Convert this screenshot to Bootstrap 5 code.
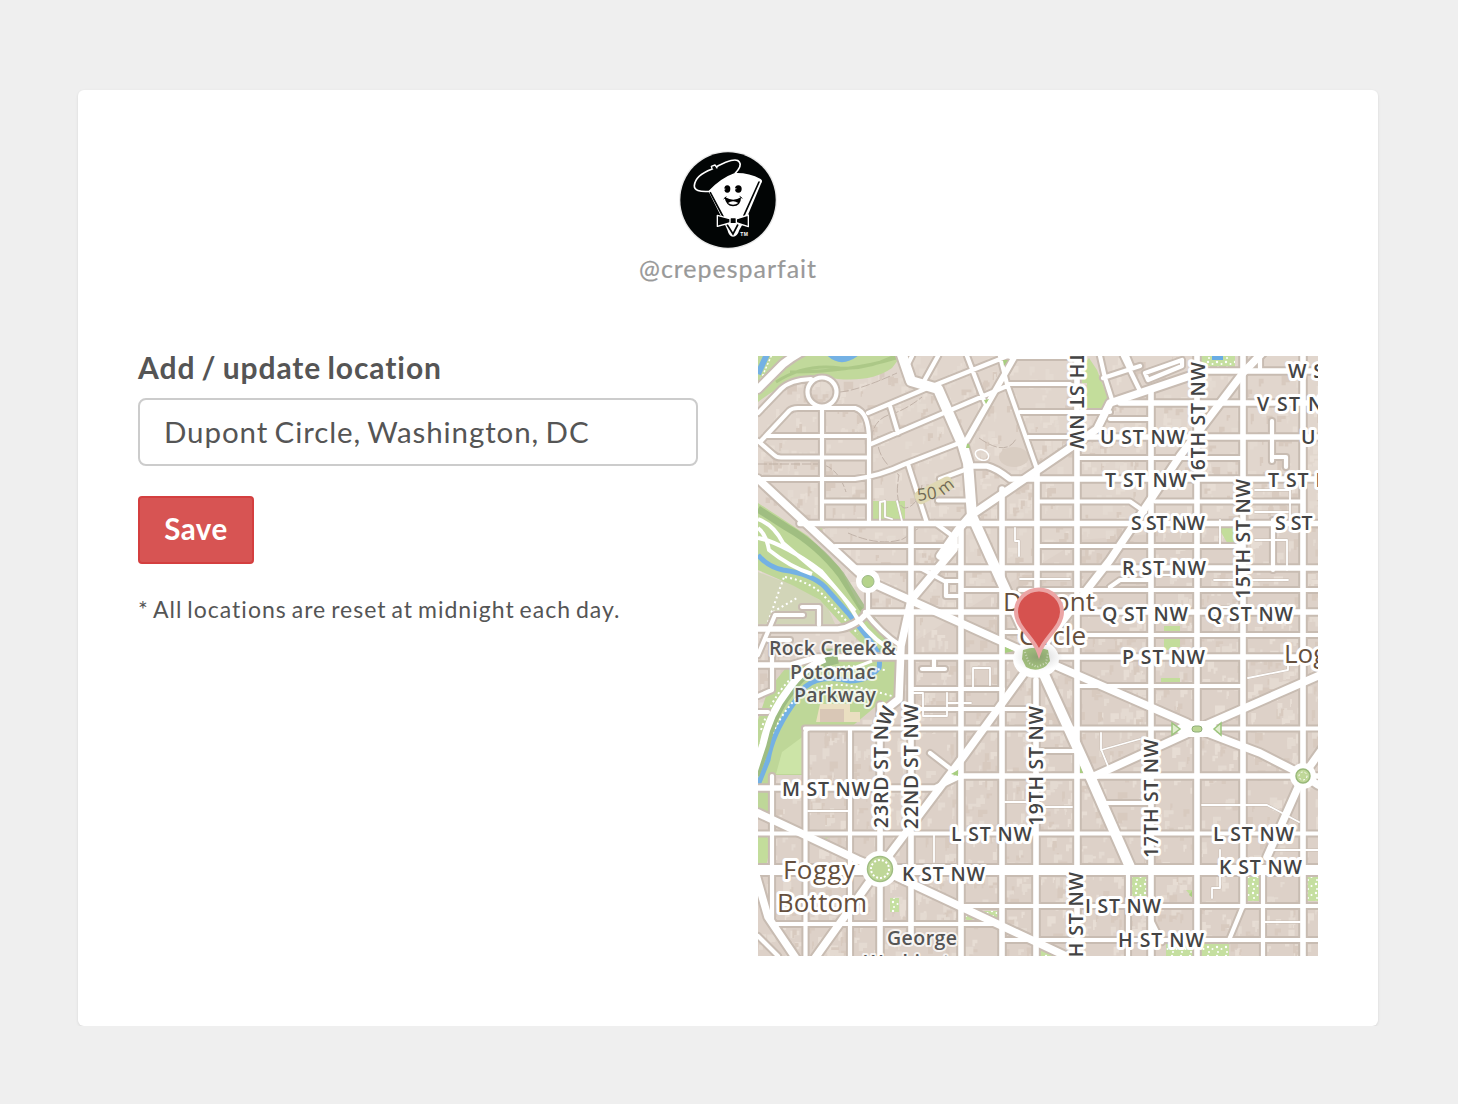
<!DOCTYPE html>
<html lang="en">
<head>
<meta charset="utf-8">
<meta name="viewport" content="width=device-width, initial-scale=1">
<title>Update location</title>
<link href="https://cdn.jsdelivr.net/npm/bootstrap@5.3.0/dist/css/bootstrap.min.css" rel="stylesheet">
<style>
body{background:#efefef;color:#555;font-family:Lato,"Open Sans",sans-serif}
.panel{width:1300px;height:936px;margin:90px 0 0 78px;padding:61px 60px 0;border:0;border-radius:6px;box-shadow:0 1px 3px rgba(0,0,0,.1)}
.avatar{width:98px;height:98px}
.handle{font-size:25px;line-height:30px;color:#999;margin-top:4px;letter-spacing:.98px;-webkit-text-stroke:.2px #999}
.cols{margin-top:73px;gap:60px}
.pane{width:560px}
.form-label{font-size:30px;line-height:28px;font-weight:700;margin:-3px 0 17px;letter-spacing:.92px;word-spacing:-2px;white-space:nowrap}
.form-control{height:68px;border:2px solid #ccc;border-radius:8px;padding:0 24px 2px 24px;font-size:29.5px;color:#555;letter-spacing:.9px;word-spacing:-2px}
.btn-save{margin-top:30px;width:116px;height:68px;padding:0 0 2px;border:2px solid #d43f3f;border-radius:4px;background:#d75453;color:#fff;font-size:29.5px;font-weight:700;letter-spacing:.5px}
.btn-save:hover{background:#c94443;color:#fff}
.note{font-size:23px;line-height:30px;margin:30px 0 0;letter-spacing:1.02px;word-spacing:-2px;white-space:nowrap}
.map{display:block;width:560px;height:600px}
.road{fill:none;stroke-linejoin:round;stroke-linecap:round}
.casing{--extra:4px;stroke:#c8bcb2}
.surface{--extra:0px;stroke:#fff}
.r2{stroke-width:calc(1.8px + var(--extra) / 4)}
.r4{stroke-width:calc(4.2px + var(--extra))}
.r5{stroke-width:calc(5.6px + var(--extra))}
.r7{stroke-width:calc(7.5px + var(--extra))}
.r10{stroke-width:calc(10px + var(--extra))}
.lbl text{font-family:"Open Sans","Noto Sans",sans-serif;paint-order:stroke;stroke:#fff;stroke-width:6px;stroke-linejoin:round}
.st{font-size:19.5px;font-weight:600;fill:#444}
.area{font-size:19.5px;font-weight:600;fill:#555}
.lbl .area text{stroke-width:4px;stroke-opacity:.75}
.hood{font-size:26px;fill:#654f3d}
</style>
</head>
<body>
<main class="card panel">
  <header class="d-flex flex-column align-items-center">
    <svg class="avatar" viewBox="33 33 294 294" aria-label="Crepes Parfait">
      <circle cx="180" cy="180" r="147" fill="#e9e9e9"/><circle cx="180" cy="180" r="143" fill="#020505"/>
      <path d="M121 153L184 101Q234 94 278 117Q286 122 279 131L241 222L214 270Q208 290 195 290Q183 289 178 269L162 235Z" fill="#fff"/>
      <path d="M127 158L169 237M273 126L228 226M178 255L195 282L209 255" fill="none" stroke="#020505" stroke-width="5" stroke-linecap="round"/>
      <path d="M124 154Q78 157 79 137Q82 106 131 88Q203 47 214 66Q223 77 201 101Q159 116 124 154Z" fill="#020505" stroke="#fff" stroke-width="5"/>
      <path d="M133 89L130 79L141 75L148 85" fill="#020505" stroke="#fff" stroke-width="4" stroke-linejoin="round"/>
      <ellipse cx="178" cy="147" rx="9" ry="11"/><ellipse cx="211" cy="147" rx="10" ry="11"/><path d="M167 148l5-1M201 147l4-1" stroke="#fff" stroke-width="3"/>
      <path d="M172 172Q196 186 219 172Q219 199 195 199Q174 197 170 173Z"/><path d="M180 189Q195 178 211 189Q195 200 180 189Z" fill="#fff"/>
      <path d="M167 177l8-7M215 169l8 6" stroke="#020505" stroke-width="3"/>
      <path d="M148 226L185 236H207L241 225V260L207 249H185L148 259Z" fill="#020505" stroke="#fff" stroke-width="4" stroke-linejoin="round"/>
      <rect x="186" y="233" width="19" height="18" rx="3" fill="#020505" stroke="#fff" stroke-width="4"/>
      <text x="217" y="289" font-family="Liberation Sans,sans-serif" font-size="15" font-weight="700" fill="#fff" textLength="23">TM</text>
    </svg>
    <div class="handle">@crepesparfait</div>
  </header>
  <div class="cols d-flex">
    <form class="pane" onsubmit="return false">
      <label class="form-label d-block" for="loc">Add / update location</label>
      <input class="form-control" id="loc" type="text" value="Dupont Circle, Washington, DC">
      <button class="btn btn-save d-block" type="submit">Save</button>
      <p class="note">* All locations are reset at midnight each day.</p>
    </form>
    <div class="pane">
      <svg class="map" viewBox="758 356 560 600" role="img" aria-label="Map of Dupont Circle">
        <defs>
          <filter id="soft"><feGaussianBlur stdDeviation=".55"/></filter>
          <radialGradient id="shade"><stop offset="0" stop-color="#555" stop-opacity=".3"/><stop offset="1" stop-color="#777" stop-opacity="0"/></radialGradient>
          <pattern id="trees" width="9" height="9" patternUnits="userSpaceOnUse"><rect width="9" height="9" fill="#c5dfa0"/><circle cx="2" cy="2" r="1.2" fill="#fff"/><circle cx="6.5" cy="4" r="1" fill="#fff"/><circle cx="3" cy="7" r="1" fill="#fff"/></pattern>
          <g id="net">
            <g class="r2">
              <path d="M880 520V502L885 501V517L892 519M897 501L902 521M808 811H850M911 693H923V716H947V693M1015 528V541H1019V556M1140 809M1202 805H1267L1299 822M1318 850H1273M1220 850V888H1212V898M1263 922H1300M1248 678L1288 670V665M1101 750L1140 739M1101 733V749L1110 771M1255 490H1290V521M1255 512H1288M1255 540H1287V570M971 703H947M973 690V668H990V685M1005 802H1030M1045 807H1072M1020 579H1070M1160 575H1180M1214 580H1288M1214 607H1240M934 835V862M1220 545V520"/>
            </g>
            <g class="r4">
              <path d="M822 407V523M836.5 392A14.5 14.5 0 1 1 807.5 392A14.5 14.5 0 1 1 836.5 392M758 413L781 389Q790 380 811 379M761 441L789 411Q792 408 798 408H855Q869 412 869 440V523M766 436H869M758 441L773 454Q776 457.5 781 457.5H869M758 479H855Q880 476 905 464L967 440M822 501.5H869M835 546H961M868 413L925 389L1010 355M871 444L1007 386M890 406L898 433M908 464L927 523M938 356L923 383M912 356L907 366M940 479L967 469M938 500.5H970M935 523L954 537M967 356L985 403M1000 356L1007 384L1037 469M1010 357H1070M1007 384H1070M1020 412H1110M1028 437H1077M1077 458H1243M1037 501.5H1130L1145 512M1155 501.5H1303M1037 546H1243M961 590H1000M1020 590H1318M1078 635H1318M911 689H1003M1077 686H1243M911 709H1036M805 728.5H1318M1040 751H1077M1105 803H1151M758 833.5H1318M961 906H1318M773 924H1000M1003 940H1318M772 776V924M805.5 956V733Q805 729 810 728.5M850 729V956M1128 867V956M1243 906L1229 940M1263 870V956M930 753L952 770M1140 391L1123 356M1103 378L1140 366M1100 356L1105 378L1113 403M1127 356L1132 368M1145 373L1182 360V366L1148 380ZM1110 419H1151M1272 421V461M1273 457H1286V467M802 607H819V625M758 655L775 615H803M768 640H790M772 640V690L758 696M922 669L945 669M934 669V659M868 581V612M758 712H768M920 568L946 582V596H961M961 581H946M1260 356V371M1005 632H1025M1273 520V570M1151 920L1162 942M758 936L778 956M865 612Q880 632 901 646M1110 587L1120 580H1150"/>
            </g>
            <g class="r5">
              <path d="M800 523.5H1318M973 466H987Q996 468 1010 479H1318M853 568H1318M758 629H838Q855 627 868 612H1318M758 665H791L818 657H1318M911 525V935M880 705V956M961 526V956M1002 489V956M1037 469V600M1036 680V956M1077 356V956M1151 391V956M1197 356V956M1243 356V906M1303 356V956M1203 371H1318M1120 403H1318M1077 437H1318M758 788H935L960 776H1318M967 440L1015 356"/>
            </g>
            <g class="r7">
              <path d="M758 389L783 364Q793 356 805 350M758 479L868 581L1036 657L1187 723L1197 729L1260 753L1303 775L1318 785M940 556L958 530L970 516L1070 448L1097 429L1110 403L1190 376L1204 370M954 536V549L911 600L901 646L899 699L885 710M1040 650L1110 560L1180 456L1243 373L1265 350M1030 665L963 757L880 867L810 965M1320 675L1197 729L1090 778M758 813L858 860L880 869L940 897L1070 958M1303 776L1267 857M1303 776L1325 745M756 875L768 917L797 960"/>
            </g>
            <g class="r10"><path d="M901 352L911 381L938 389L963 446L968 463L972 516L990 556L1036 657L1083 760L1130 867M758 870H1318"/></g>
          </g>
        </defs>
        <rect x="758" y="356" width="560" height="600" fill="#ddd1c8"/>
        <path d="M758 356H1318V520L1080 540L900 650L758 650Z" fill="#e1d6cd"/>
        <g id="buildings"></g>
        <path d="M758 356H901L892 368Q872 382 838 379Q795 372 758 402Z" fill="#c1d99b"/>
        <path d="M790 372Q850 372 896 358M776 382Q805 363 840 368Q870 370 900 353" fill="none" stroke="#a2c17f" stroke-width="3" opacity=".7"/>
        <path d="M828 352Q841 366 858 352M769 350L758 374" fill="none" stroke="#74b1e4" stroke-width="6"/>
        <path d="M773 352L758 386" stroke="#fff" stroke-width="1.5" stroke-dasharray="2 2"/>
        <path d="M758 572L800 588L826 604L835 624H758Z" fill="#d2d5b8"/>
        <path d="M758 503L778 516L808 536L840 568L858 603L870 617L901 645V700L875 707L850 728H805V775H773L768 817H758V720L768 690L785 669L818 657H876L858 640L838 620L820 600L794 586L758 570Z" fill="#bed798"/>
        <path d="M758 509L786 527Q818 545 841 575L862 608L890 640M782 698L764 748M823 652H881" fill="none" stroke="#95b57a" stroke-width="7" opacity=".75"/>
        <path d="M805 735L782 752L776 774H804Z" fill="#cce4a7"/>
        <path d="M820 704H850V712H860V722H816Z" fill="#eadfc1"/><path d="M820 709H844V722H820Z" fill="#d9c7b6"/>
        <path d="M758 555Q768 567 783 570Q812 574 825 587L848 613L868 638Q882 654 879 668Q868 681 850 681Q820 674 805 687L791 707Q772 735 768 760L758 785" fill="none" stroke="#74b1e4" stroke-width="5"/>
        <path d="M785 577Q812 582 825 597L858 634M765 752Q778 715 799 696Q824 680 858 687L892 696M761 730Q774 690 800 671L850 666L885 670M768 622L784 577M773 612L797 598" fill="none" stroke="#fff" stroke-width="2" stroke-dasharray="2 3"/>
        <g fill="#c3dd9b">
          <path d="M871 501H905V520H871ZM813 525H822V534ZM912 386L922 385L930 390L915 392ZM1089 358L1097 370L1108 398V409H1087V383H1082V366ZM1002 359H1008L1003 366ZM1201 356H1235V368H1201ZM1225 525H1234V546H1229L1218 527ZM1164 626H1180V647H1172L1168 650H1164ZM1161 678H1180V683H1161ZM1172 722L1181 729L1172 736ZM1221 722L1213 729L1221 736Z"/>
          <path d="M758 836Q771 832 770 850L766 866H758ZM817 839L829 837L823 841ZM1186 890H1192V897Z"/>
        </g>
        <path d="M1201 356H1235V368H1201ZM1132 873H1147V896H1132ZM1245 873H1261V901H1245ZM1307 873H1318V901H1307ZM1166 944H1229V956H1166ZM964 911H998V922L985 915L965 922ZM1038 944H1050L1060 956H1038ZM853 920H876V927H853ZM890 898H899V912H890Z" fill="url(#trees)"/>
        <path d="M871 439Q874 418 892 414Q907 409 922 397M878 436Q875 457 899 475Q894 503 904 508Q917 508 922 485M840 392Q860 390 897 373M758 464H820Q838 467 846 492M848 533Q880 547 903 539L919 528M979 438Q1006 457 1016 439" fill="none" stroke="#b9aaa0" stroke-width=".8" stroke-dasharray="9 2"/>
        <ellipse cx="1014" cy="457" rx="15" ry="10" fill="#d9cdc2"/>
        <ellipse cx="982" cy="455" rx="7" ry="5" transform="rotate(25 982 455)" fill="none" stroke="#fff" stroke-width="1.5"/>
        <g class="road"><use href="#net" class="casing" filter="url(#soft)"/><use href="#net" class="surface"/></g>
        <path d="M1202 356H1235V366H1202Z" fill="url(#trees)"/><rect x="1212" y="353" width="11" height="7" fill="#69ace4"/>
        <g fill="none" stroke="#fff" stroke-width="4"><path d="M758 519Q774 525 783 543L815 570Q840 588 857 618Q874 642 900 655M758 538Q783 543 821 571L855 611M758 528Q766 534 769 550Q790 567 812 574"/><path d="M820 657Q827 670 846 671L872 661M872 642L866 656" stroke-width="3"/><path d="M838 659Q806 665 789 693Q772 714 765 748L755 775" stroke="#9ebd83" stroke-width="9"/><path d="M825 659Q803 668 788 690Q769 714 763 744L754 772" stroke-width="7"/></g>
        <circle cx="868" cy="581" r="12" fill="#fff"/><circle cx="868" cy="581.5" r="6" fill="#b5d38b" stroke="#9cb987"/>
        <circle cx="880" cy="869" r="18" fill="#fff"/><circle cx="880" cy="869" r="12.5" fill="#bfd798" stroke="#a0bd83" stroke-width="1.5"/><circle cx="880" cy="869" r="9" fill="none" stroke="#fff" stroke-width="2" stroke-dasharray="2 2"/>
        <circle cx="1303" cy="776" r="13" fill="#fff"/><circle cx="1303" cy="776" r="7" fill="#bfd798" stroke="#98b879" stroke-width="1.5"/><circle cx="1303" cy="776" r="4" fill="none" stroke="#fff" stroke-dasharray="2 2"/>
        <path d="M1172 729L1185 721H1209L1222 729L1209 737H1185Z" fill="#fff"/><rect x="1192" y="726" width="10" height="6" rx="3" fill="#bcd694" stroke="#8fae78"/><path d="M1172 723L1180 729L1172 735ZM1221 723L1214 729L1221 735Z" fill="#e1edce" stroke="#9cc57c" stroke-width="1.5"/>
        <ellipse cx="1036" cy="659" rx="23" ry="19" fill="#fff"/>
        <path d="M1023 650Q1036 645 1048 650L1050 661L1046 666Q1036 673 1026 667L1022 659Z" fill="#a4c47d"/><path d="M1025 652L1029 663L1037 667L1046 663L1048 653" fill="none" stroke="#dce8c7" stroke-width="2" stroke-dasharray="1 2"/>
        <path d="M967 444H969L970 448H966ZM984 400L989 399L986 404ZM1003 360L1008 360L1004 366ZM951 774L958 770V776ZM1080 766L1083 773H1080ZM1005 647L1014 651L1005 653ZM1189 895L1192 891V897Z" fill="#a8ce80"/>
        <g class="lbl">
          <g transform="rotate(-27 935 491)"><rect x="914" y="483" width="41" height="14" rx="5" fill="#dfd8b3"/></g>
          <text transform="translate(918 501) rotate(-8)" style="font-size:17px;fill:#706a55;stroke:none">50</text><text transform="translate(943 496) rotate(-38)" style="font-size:17px;fill:#706a55;stroke:none">m</text>
          <g class="hood"><text x="1003" y="611" textLength="92">Dupont</text><text x="1019" y="645" textLength="67">Circle</text><text x="1284" y="663">Logan</text><text x="783" y="879" textLength="72">Foggy</text><text x="777" y="912" textLength="90">Bottom</text></g>
          <g class="area"><text x="769" y="655" textLength="127">Rock Creek &amp;</text><text x="790" y="679" textLength="86">Potomac</text><text x="794" y="702" textLength="82">Parkway</text><text x="887" y="945" textLength="70">George</text><text x="864" y="969" textLength="110">Washington</text></g>
          <g class="st">
            <text x="1288" y="378" textLength="89">W ST NW</text><text x="1257" y="411" textLength="86">V ST NW</text><text x="1100" y="444" textLength="85">U ST NW</text><text x="1301" y="444">U ST NW</text>
            <text x="1105" y="487" textLength="82">T ST NW</text><text x="1268" y="487" textLength="82">T ST NW</text><text x="1131" y="530" textLength="74">S ST NW</text><text x="1275" y="530">S ST</text>
            <text x="1122" y="575" textLength="84">R ST NW</text><text x="1102" y="621" textLength="86">Q ST NW</text><text x="1207" y="621" textLength="86">Q ST NW</text><text x="1122" y="664" textLength="83">P ST NW</text>
            <text x="782" y="796" textLength="88">M ST NW</text><text x="951" y="841" textLength="81">L ST NW</text><text x="1213" y="841" textLength="81">L ST NW</text><text x="902" y="881" textLength="83">K ST NW</text><text x="1219" y="874" textLength="83">K ST NW</text><text x="1085" y="913" textLength="76">I ST NW</text><text x="1118" y="947" textLength="86">H ST NW</text>
            <text transform="translate(1205 482) rotate(-90)" textLength="120">16TH ST NW</text><text transform="translate(1250 599) rotate(-90)" textLength="120">15TH ST NW</text><text transform="translate(1158 858) rotate(-90)" textLength="119">17TH ST NW</text><text transform="translate(1043 826) rotate(-90)" textLength="120">19TH ST NW</text><text transform="translate(918 829) rotate(-90)" textLength="125">22ND ST NW</text>
            <text transform="translate(888 828) rotate(-90)" textLength="103">23RD ST N</text><text transform="translate(889 727) rotate(-68)">W</text>
            <text transform="translate(1070 328) rotate(90)" textLength="121">18TH ST NW</text><text transform="translate(1083 993) rotate(-90)" textLength="121">18TH ST NW</text>
          </g>
        </g>
        <ellipse cx="1038" cy="657" rx="25" ry="14" fill="url(#shade)"/>
        <path d="M1039 653C1034 638 1016 627 1016 612A23 22.5 0 0 1 1062 612C1062 627 1044 638 1039 653Z" fill="#d6524f" stroke="#eba5a5" stroke-width="4"/>
      </svg>
    </div>
  </div>
</main>
<script src="https://cdn.jsdelivr.net/npm/bootstrap@5.3.0/dist/js/bootstrap.bundle.min.js"></script>
<script>
// Building footprints scattered through the city blocks, seeded so the map is stable.
let seed = 41;
const rnd = () => (seed = (seed * 16807) % 2147483647) / 2147483647;
const paths = ['', '', ''];
for (let i = 0; i < 2300; i++) {
  const x = 758 + rnd() * 560, y = 356 + rnd() * 600, w = 2 + rnd() * 8, h = 2 + rnd() * 6, k = Math.floor(rnd() * 3);
  paths[k] += `M${x.toFixed(1)} ${y.toFixed(1)}h${w.toFixed(1)}v${h.toFixed(1)}h${(-w / 2).toFixed(1)}v3h${(-w / 2).toFixed(1)}z`;
}
document.getElementById('buildings').innerHTML = ['#e7ddd4', '#d8cabf', '#e4dad1'].map((c, i) => `<path d="${paths[i]}" fill="${c}"/>`).join('');
</script>
</body>
</html>
